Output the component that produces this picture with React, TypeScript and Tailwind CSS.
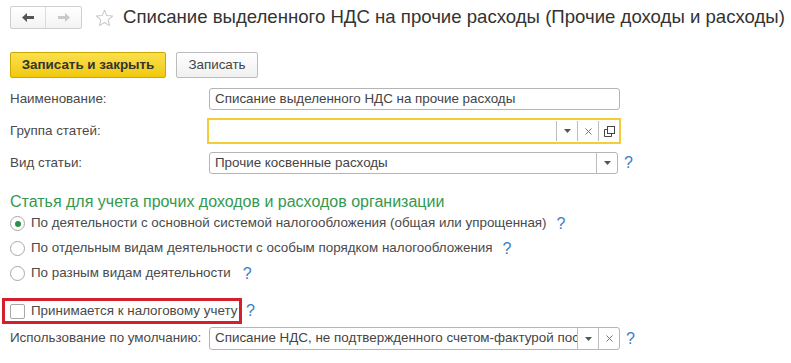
const font = "font-['Liberation_Sans',Arial,sans-serif]";

function Arrow({ dir, color }: { dir: 'left' | 'right'; color: string }) {
  return (
    <svg width="12" height="9" viewBox="0 0 12 9" className={dir === 'right' ? 'rotate-180' : ''}>
      <path d="M0 4.5 L5 0 L5 3 L12 3 L12 6 L5 6 L5 9 Z" fill={color} />
    </svg>
  );
}

function Star() {
  return (
    <svg width="19" height="18" viewBox="0 0 24 23">
      <path
        d="M12 1.5 L14.9 8.4 L22.4 9 L16.7 13.9 L18.4 21.2 L12 17.3 L5.6 21.2 L7.3 13.9 L1.6 9 L9.1 8.4 Z"
        fill="none"
        stroke="#c8c8c8"
        strokeWidth="1.3"
        strokeLinejoin="round"
      />
    </svg>
  );
}

function DropArrow() {
  return (
    <svg width="7" height="4" viewBox="0 0 7 4">
      <path d="M0 0 L7 0 L3.5 4 Z" fill="#555" />
    </svg>
  );
}

function Cross() {
  return (
    <svg width="7" height="7" viewBox="0 0 7 7">
      <path d="M0.5 0.5 L6.5 6.5 M6.5 0.5 L0.5 6.5" stroke="#777" strokeWidth="1" />
    </svg>
  );
}

function OpenIcon() {
  return (
    <svg width="11" height="11" viewBox="0 0 11 11">
      <path d="M0.5 3.5 L0.5 10.5 L7.5 10.5" fill="none" stroke="#444" strokeWidth="1" />
      <rect x="3.5" y="0.5" width="7" height="7" fill="white" stroke="#444" strokeWidth="1" />
      <path d="M0.5 3.5 L3.5 3.5 M7.5 7.5 L7.5 10.5" fill="none" stroke="#444" strokeWidth="1" />
    </svg>
  );
}

function Help({ className = '' }: { className?: string }) {
  return <span className={`shrink-0 text-[16px] leading-none text-[#3d7bc4] ${className}`}>?</span>;
}

function Seg({ children }: { children: React.ReactNode }) {
  return <div className="w-[21px] shrink-0 h-full flex items-center justify-center border-l border-[#bdbdbd]">{children}</div>;
}

function Radio({ checked }: { checked?: boolean }) {
  return (
    <div className="w-[15px] h-[15px] shrink-0 rounded-full border border-[#a8a8a8] bg-white flex items-center justify-center">
      {checked && <div className="w-[6px] h-[6px] rounded-full bg-[#2f8f4a]" />}
    </div>
  );
}

function Label({ children }: { children: React.ReactNode }) {
  return <div className="w-[199px] shrink-0 whitespace-nowrap">{children}</div>;
}

export default function App() {
  return (
    <div className={`w-[791px] h-[363px] bg-white overflow-hidden ${font} text-[13.4px] text-[#4a4a4a]`}>
      {/* header */}
      <div className="flex items-center mt-[6px] ml-[10px] h-[23px]">
        <div className="flex shrink-0 h-[23px] w-[72px] border border-[#cfcfcf] rounded-[2px] bg-gradient-to-b from-white to-[#f3f3f3]">
          <div className="w-1/2 flex items-center justify-center border-r border-[#dcdcdc]">
            <Arrow dir="left" color="#555" />
          </div>
          <div className="w-1/2 flex items-center justify-center">
            <Arrow dir="right" color="#c9c9c9" />
          </div>
        </div>
        <div className="ml-[13px] shrink-0 flex items-center">
          <Star />
        </div>
        <div className="ml-[9px] text-[18.6px] leading-none text-[#333] whitespace-nowrap">
          Списание выделенного НДС на прочие расходы (Прочие доходы и расходы)
        </div>
      </div>

      {/* command bar */}
      <div className="flex mt-[23px] ml-[10px] gap-[10px]">
        <button className="h-[26px] w-[156px] rounded-[2px] border border-[#c9a800] bg-gradient-to-b from-[#fbe04a] to-[#f1c900] font-bold text-[#333] text-[13.4px]">
          Записать и закрыть
        </button>
        <button className="h-[26px] w-[82px] rounded-[2px] border border-[#bcbcbc] bg-gradient-to-b from-white to-[#f0f0f0] text-[#444] text-[13.4px]">
          Записать
        </button>
      </div>

      {/* form */}
      <div className="ml-[10px]">
        <div className="flex items-center mt-[10px] h-[22px]">
          <Label>Наименование:</Label>
          <div className="w-[411px] shrink-0 h-[22px] border border-[#b5b5b5] rounded-[3px] flex items-center px-[5px] text-[#444]">
            Списание выделенного НДС на прочие расходы
          </div>
        </div>

        <div className="flex items-center mt-[8px] h-[26px]">
          <Label>Группа статей:</Label>
          <div className="-ml-[2px] w-[414px] shrink-0 h-[26px] border-2 border-[#f2cd37] flex">
            <div className="flex-1" />
            <div className="flex h-full py-[1px]">
              <Seg><DropArrow /></Seg>
              <Seg><Cross /></Seg>
              <Seg><OpenIcon /></Seg>
            </div>
          </div>
        </div>

        <div className="flex items-center mt-[8px] h-[22px]">
          <Label>Вид статьи:</Label>
          <div className="w-[409px] shrink-0 h-[22px] border border-[#b5b5b5] rounded-[3px] flex">
            <div className="flex-1 flex items-center px-[5px] text-[#444]">Прочие косвенные расходы</div>
            <Seg><DropArrow /></Seg>
          </div>
          <Help className="ml-[6px]" />
        </div>

        <div className="mt-[18px] h-[19px] text-[16px] leading-[19px] text-[#35994f] whitespace-nowrap">
          Статья для учета прочих доходов и расходов организации
        </div>

        <div className="flex items-center h-[25px]">
          <Radio checked />
          <span className="ml-[6px] whitespace-nowrap">По деятельности с основной системой налогообложения (общая или упрощенная)</span>
          <Help className="ml-[10px]" />
        </div>
        <div className="flex items-center h-[25px]">
          <Radio />
          <span className="ml-[6px] whitespace-nowrap">По отдельным видам деятельности с особым порядком налогообложения</span>
          <Help className="ml-[10px]" />
        </div>
        <div className="flex items-center h-[25px]">
          <Radio />
          <span className="ml-[6px] whitespace-nowrap">По разным видам деятельности</span>
          <Help className="ml-[12px]" />
        </div>
      </div>

      <div className="flex items-center mt-[12px]">
        <div className="ml-[2px] w-[240px] h-[26px] shrink-0 border-[3px] border-[#d4202c] flex items-center pl-[5px]">
          <div className="w-[15px] h-[15px] shrink-0 border border-[#a8a8a8] rounded-[2px] bg-white" />
          <span className="ml-[6px] whitespace-nowrap">Принимается к налоговому учету</span>
        </div>
        <Help className="ml-[4px]" />
      </div>

      <div className="flex items-center mt-[3px] ml-[10px] h-[23px]">
        <Label>Использование по умолчанию:</Label>
        <div className="w-[411px] shrink-0 h-[23px] border border-[#b5b5b5] rounded-[3px] flex">
          <div className="flex-1 min-w-0 overflow-hidden flex items-center pl-[5px] text-[#444]">
            <span className="block w-full overflow-hidden whitespace-nowrap">
              Списание НДС, не подтвержденного счетом-фактурой поставщика
            </span>
          </div>
          <Seg><DropArrow /></Seg>
          <Seg><Cross /></Seg>
        </div>
        <Help className="ml-[6px]" />
      </div>
    </div>
  );
}
